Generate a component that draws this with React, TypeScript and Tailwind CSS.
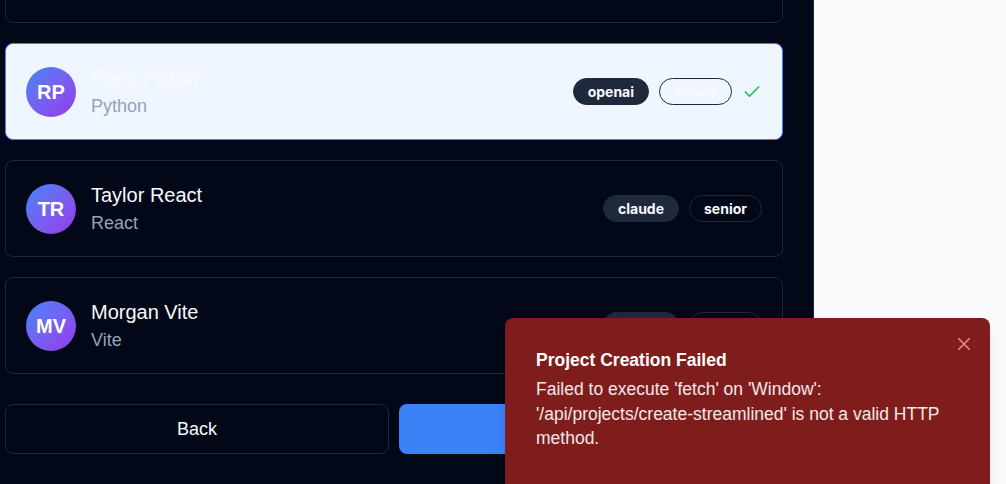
import React from "react";

type Person = {
  initials: string;
  name: string;
  stack: string;
  model: string;
  level: string;
  selected?: boolean;
};

const people: Person[] = [
  { initials: "RP", name: "Riley Python", stack: "Python", model: "openai", level: "senior", selected: true },
  { initials: "TR", name: "Taylor React", stack: "React", model: "claude", level: "senior" },
  { initials: "MV", name: "Morgan Vite", stack: "Vite", model: "claude", level: "senior" },
];

function Card({ p }: { p: Person }) {
  return (
    <div
      className={
        "flex h-[97px] shrink-0 items-center justify-between rounded-lg border px-5 " +
        (p.selected ? "border-[#3b82f6] bg-[#eff6ff]" : "border-[#1e293b] bg-[#020817]")
      }
    >
      <div className="flex items-center gap-[15px]">
        <div className="flex h-[50px] w-[50px] items-center justify-center rounded-full bg-gradient-to-br from-[#3b82f6] to-[#9333ea] text-xl font-bold text-white">
          {p.initials}
        </div>
        <div className="flex flex-col">
          <div className="text-xl leading-7 text-[#f8fafc]">{p.name}</div>
          <div className="text-lg leading-7 text-[#94a3b8]">{p.stack}</div>
        </div>
      </div>
      <div className="flex items-center gap-[10px] font-['Inter',sans-serif]">
        <span className="flex h-[27px] items-center rounded-full border border-[#1e293b] bg-[#1e293b] px-[14px] text-sm font-bold text-[#f8fafc]">
          {p.model}
        </span>
        <span className="flex h-[27px] items-center rounded-full border border-[#1e293b] px-[14px] text-sm font-bold text-[#f8fafc]">
          {p.level}
        </span>
        {p.selected && (
          <svg width="20" height="20" viewBox="0 0 24 24" fill="none" stroke="#22c55e" strokeWidth="2" strokeLinecap="round" strokeLinejoin="round">
            <path d="M20 6 9 17l-5-5" />
          </svg>
        )}
      </div>
    </div>
  );
}

export default function App() {
  return (
    <div className="relative flex h-[484px] w-[1006px] overflow-hidden bg-[#f8fafc] font-['Liberation_Sans',Arial,sans-serif]">
      <div className="h-full w-[814px] shrink-0 overflow-hidden border-r border-[#1e293b] bg-[#020817]">
        <div className="-mt-[74px] flex flex-col gap-[20px] pl-[5px] pr-[30px]">
          <div className="h-[97px] shrink-0 rounded-lg border border-[#1e293b] bg-[#020817]" />
          {people.map((p) => (
            <Card key={p.initials} p={p} />
          ))}
          <div className="mt-[10px] grid grid-cols-2 gap-[10px]">
            <button className="flex h-[50px] items-center justify-center rounded-lg border border-[#1e293b] bg-[#020817] text-lg text-[#f8fafc]">
              Back
            </button>
            <button aria-label="Create Project" className="h-[50px] rounded-lg bg-[#3b82f6]" />
          </div>
        </div>
      </div>
      <div className="absolute left-[505px] top-[318px] h-[200px] w-[485px] rounded-lg bg-[#7f1d1d] pl-[31px] pr-[32px] pt-[30px] shadow-lg">
        <div className="text-[17.5px] font-bold leading-6 text-white">Project Creation Failed</div>
        <div className="mt-[5px] text-[17.5px] leading-[24.7px] text-white/90">
          Failed to execute 'fetch' on 'Window': '/api/projects/create-streamlined' is not a valid HTTP method.
        </div>
        <svg className="absolute left-[453px] top-[20px]" width="12" height="12" viewBox="0 0 12 12" fill="none" stroke="#ea8a8a" strokeWidth="1.6" strokeLinecap="round">
          <path d="M0.8 0.8 11.2 11.2M11.2 0.8 0.8 11.2" />
        </svg>
      </div>
    </div>
  );
}
